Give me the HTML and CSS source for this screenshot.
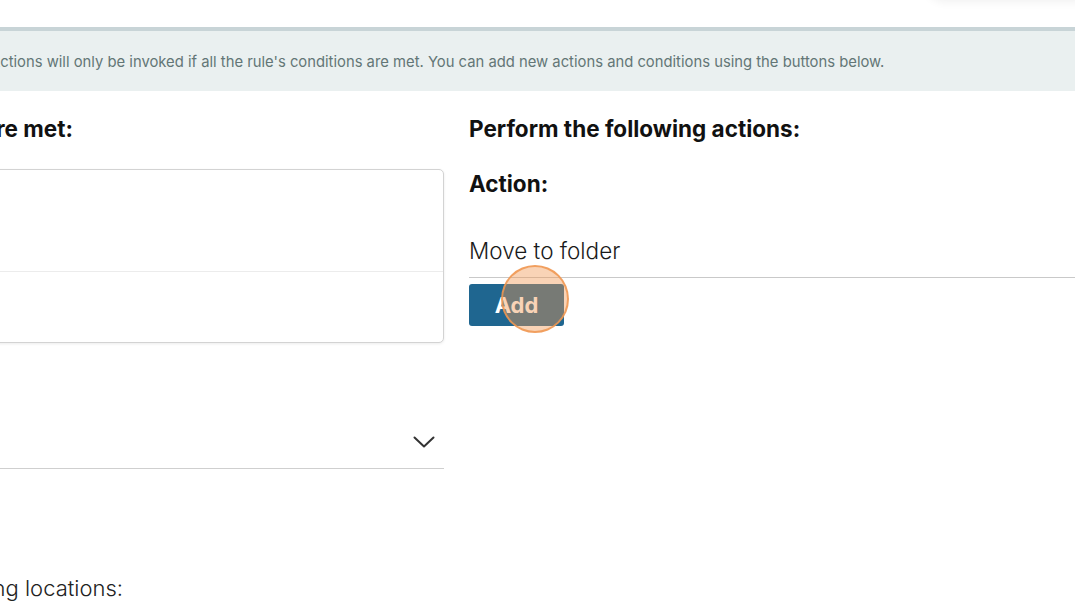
FILE: index.html
```html
<!DOCTYPE html>
<html lang="en">
<head>
<meta charset="utf-8">
<title>Rule editor</title>
<link rel="stylesheet" href="styles.css">
</head>
<body>
<div class="page">
  <header class="topbar">
    <div class="top-action"></div>
  </header>
  <div class="info">
    <p class="info-text">Actions will only be invoked if all the rule's conditions are met. You can add new actions and conditions using the buttons below.</p>
  </div>
  <main class="main">
    <section class="col col-left">
      <h2 class="heading">Apply this rule if all of the following conditions are met:</h2>
      <div class="cond-box">
        <div class="cond-row cond-row-top"></div>
        <div class="cond-row cond-row-bottom"></div>
      </div>
      <div class="select">
        <span class="select-value"></span>
        <svg class="chevron" width="22" height="12" viewBox="0 0 22 12" aria-hidden="true">
          <path d="M1.5 1.5 L11 10.5 L20.5 1.5" fill="none" stroke="#333" stroke-width="2" stroke-linecap="round" stroke-linejoin="round"/>
        </svg>
      </div>
      <p class="locations">Apply to items in the following locations:</p>
    </section>
    <section class="col col-right">
      <h2 class="heading">Perform the following actions:</h2>
      <h3 class="subheading">Action:</h3>
      <div class="field">Move to folder</div>
      <div class="btn-wrap">
        <button class="btn">Add</button>
        <span class="click-mark"></span>
      </div>
    </section>
  </main>
</div>
</body>
</html>
```
FILE: styles.css
```css
* { box-sizing: border-box; }
html, body {
  margin: 0;
  padding: 0;
  background: #fff;
  overflow: hidden;
}
body {
  font-family: Inter, "Noto Sans", "Liberation Sans", sans-serif;
  color: #111;
  width: 1075px;
  height: 601px;
}
.page {
  width: 1075px;
  height: 601px;
  overflow: hidden;
}
.topbar {
  height: 27px;
  position: relative;
}
.top-action {
  position: absolute;
  right: -20px;
  top: -40px;
  width: 170px;
  height: 40px;
  border-radius: 20px;
  box-shadow: 0 2px 10px rgba(0, 0, 0, 0.06);
}
.info {
  border-top: 4px solid #c8d4d7;
  background: #eaf0f0;
  height: 64px;
  display: flex;
  align-items: center;
}
.info-text {
  margin: 0 0 0 -10px;
  font-size: 14.8px;
  color: #637676;
  white-space: nowrap;
  padding-top: 1px;
}
.main {
  display: grid;
  grid-template-columns: 1144px 1fr;
  column-gap: 25px;
  margin-left: -700px;
  padding-top: 25px;
}
.heading {
  margin: 0;
  font-size: 22.5px;
  font-weight: 700;
  line-height: 26px;
  white-space: nowrap;
}
.col-left .heading {
  text-align: right;
  padding-right: 371px;
}
.cond-box {
  margin-top: 27px;
  border: 1px solid #d3d3d3;
  border-radius: 5px;
  box-shadow: 0 1px 3px rgba(0, 0, 0, 0.08);
  background: #fff;
}
.cond-row-top {
  height: 102px;
  border-bottom: 1px solid #ececec;
}
.cond-row-bottom {
  height: 70px;
}
.select {
  margin-top: 78px;
  height: 48px;
  border-bottom: 1px solid #cfcfcf;
  display: flex;
  align-items: center;
  justify-content: flex-end;
  padding-right: 9px;
  padding-bottom: 5px;
}
.locations {
  margin: 106px 0 0 0;
  font-size: 22px;
  font-weight: 300;
  color: #222;
  text-align: right;
  padding-right: 321px;
  white-space: nowrap;
}
.subheading {
  margin: 29px 0 0 0;
  font-size: 22.5px;
  font-weight: 700;
  line-height: 26px;
}
.field {
  margin-top: 40px;
  font-size: 22.5px;
  font-weight: 300;
  color: #1a1a1a;
  height: 41px;
  line-height: 27px;
  border-bottom: 1px solid #c9c9c9;
}
.btn-wrap {
  position: relative;
  margin-top: 6px;
  width: 95px;
  height: 42px;
}
.btn {
  width: 95px;
  height: 42px;
  border: none;
  border-radius: 3px;
  background: #1f6690;
  color: #fff;
  font-family: Inter, "Noto Sans", sans-serif;
  font-size: 22px;
  font-weight: 700;
  padding: 0;
}
.click-mark {
  position: absolute;
  left: 32px;
  top: -19px;
  width: 68px;
  height: 68px;
  border-radius: 50%;
  border: 2px solid rgba(240, 150, 80, 0.85);
  background: rgba(240, 150, 80, 0.42);
  pointer-events: none;
}
```
